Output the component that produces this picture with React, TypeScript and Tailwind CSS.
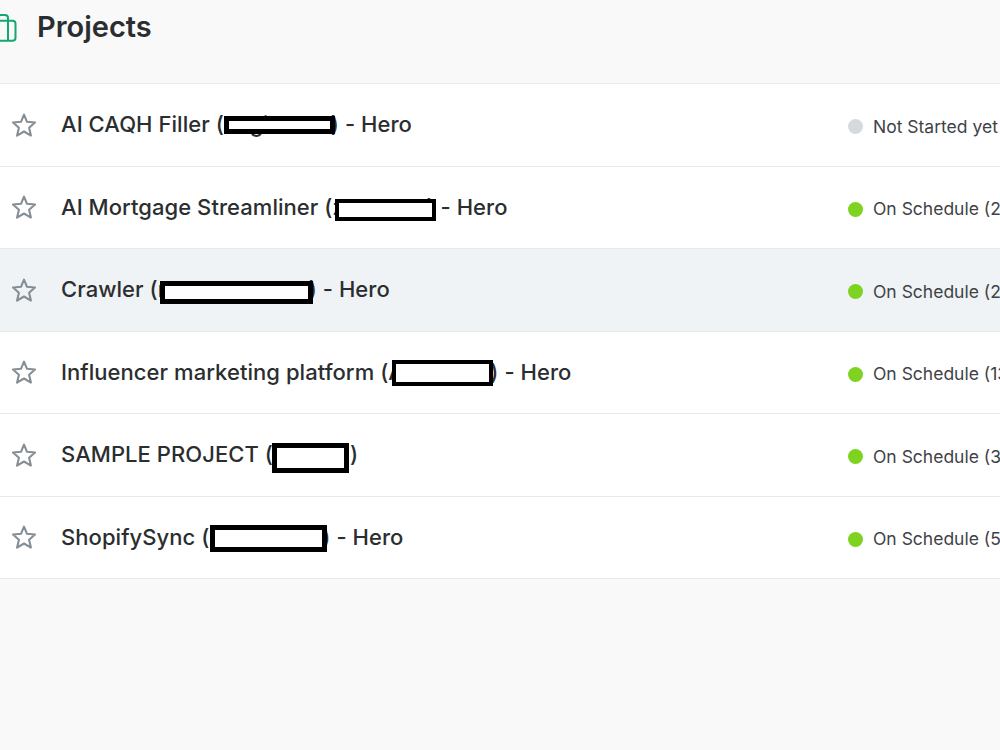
import clsx from 'clsx';

interface Fragment {
  char: string;
  left: number;
}

interface Project {
  name: string;
  suffix: string;
  slot: number;
  mask: { left: number; top: number; width: number; height: number; border: number };
  fragments: Fragment[];
  status: string;
  started: boolean;
  active?: boolean;
}

const projects: Project[] = [
  {
    name: 'AI CAQH Filler (',
    suffix: ') - Hero',
    slot: 107,
    mask: { left: 224, top: 32, width: 111, height: 18, border: 5 },
    fragments: [{ char: 'g', left: 26 }, { char: 'i', left: 39 }],
    status: 'Not Started yet',
    started: false,
  },
  {
    name: 'AI Mortgage Streamliner (',
    suffix: ') - Hero',
    slot: 94,
    mask: { left: 335, top: 32, width: 101, height: 22, border: 4 },
    fragments: [{ char: 'z', left: 0 }, { char: 'l', left: 65 }],
    status: 'On Schedule (2',
    started: true,
  },
  {
    name: 'Crawler (',
    suffix: ') - Hero',
    slot: 151,
    mask: { left: 160, top: 32, width: 153, height: 23, border: 5 },
    fragments: [{ char: 'r', left: 0 }, { char: 'l', left: 42 }],
    status: 'On Schedule (2',
    started: true,
    active: true,
  },
  {
    name: 'Influencer marketing platform (',
    suffix: ') - Hero',
    slot: 102,
    mask: { left: 392, top: 28, width: 101, height: 26, border: 4 },
    fragments: [{ char: 'A', left: 0 }],
    status: 'On Schedule (13',
    started: true,
  },
  {
    name: 'SAMPLE PROJECT (',
    suffix: ')',
    slot: 77,
    mask: { left: 272, top: 29, width: 77, height: 30, border: 5 },
    fragments: [],
    status: 'On Schedule (3',
    started: true,
  },
  {
    name: 'ShopifySync (',
    suffix: ') - Hero',
    slot: 113,
    mask: { left: 210, top: 28, width: 117, height: 27, border: 5 },
    fragments: [],
    status: 'On Schedule (5',
    started: true,
  },
];

function StarIcon() {
  return (
    <svg className="h-[26px] w-[26px] shrink-0" viewBox="0 0 26 26" fill="none" stroke="#868e96" strokeWidth="2.1" strokeLinejoin="round">
      <path d="M13 2.7 16 9.8 24 10.5 18.1 15.7 19.9 23.6 13 19.5 6.1 23.6 7.9 15.7 2 10.5 10 9.8Z" />
    </svg>
  );
}

function ProjectsIcon() {
  return (
    <svg className="h-[30px] w-[18px] shrink-0" viewBox="0 0 18 30" fill="none" stroke="#12a870" strokeWidth="2">
      <rect x="-12" y="7.8" width="27.5" height="20" rx="3" />
      <path d="M-2 7.8V5a3 3 0 0 1 3-3h4a3 3 0 0 1 3 3v22.8" />
    </svg>
  );
}

function ProjectRow({ project }: { project: Project }) {
  const { mask } = project;
  return (
    <li
      className={clsx(
        'relative flex h-[82.5px] items-center border-b border-[#e6eaeb] pl-[11px]',
        project.active ? 'bg-[#eff3f5]' : 'bg-white'
      )}
    >
      <StarIcon />
      <div className="ml-[24px] w-[787.3px] shrink-0 whitespace-pre pb-[1.5px] text-[22px] font-medium leading-[30px] tracking-[0.05px] text-[#2b2e30]">
        <span>{project.name}</span>
        <span className="relative inline-block" style={{ width: project.slot }}>
          {project.fragments.map((f) => (
            <span key={f.left} className="absolute -bottom-[7px] leading-[30px]" style={{ left: f.left }}>
              {f.char}
            </span>
          ))}
        </span>
        <span>{project.suffix}</span>
      </div>
      <div className="flex shrink-0 items-center gap-[9.7px] pt-[4px]">
        <span className={clsx('h-[15px] w-[15px] rounded-full', project.started ? 'bg-[#7ed321]' : 'bg-[#d5dade]')} />
        <span className="whitespace-nowrap text-[17.5px] leading-6 text-[#3f4347]">{project.status}</span>
      </div>
      {/* Redaction box over the client name */}
      <span
        className="absolute border-black bg-white"
        style={{ left: mask.left, top: mask.top, width: mask.width, height: mask.height, borderWidth: mask.border }}
      />
    </li>
  );
}

export default function App() {
  return (
    <div className="h-[750px] w-[1000px] overflow-hidden bg-[#f9f9f9] font-['Inter',sans-serif]">
      <header className="flex h-[83px] items-start pt-[7px]">
        <div className="pt-[6px]">
          <ProjectsIcon />
        </div>
        <h1 className="ml-[19px] text-[29px] font-semibold leading-[40px] text-[#2b2e30]">Projects</h1>
      </header>
      <ul className="border-t border-[#e6eaeb]">
        {projects.map((p) => (
          <ProjectRow key={p.name} project={p} />
        ))}
      </ul>
    </div>
  );
}
